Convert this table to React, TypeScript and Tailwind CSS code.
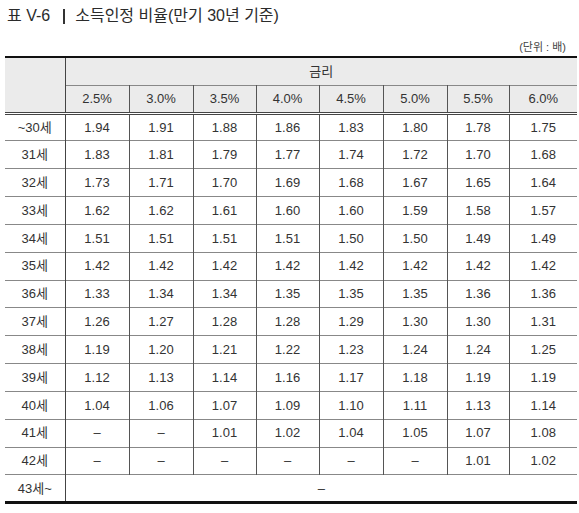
import React from "react";

const rates = ["2.5%", "3.0%", "3.5%", "4.0%", "4.5%", "5.0%", "5.5%", "6.0%"];

const rows: [string, string[]][] = [
  ["~30세", ["1.94", "1.91", "1.88", "1.86", "1.83", "1.80", "1.78", "1.75"]],
  ["31세", ["1.83", "1.81", "1.79", "1.77", "1.74", "1.72", "1.70", "1.68"]],
  ["32세", ["1.73", "1.71", "1.70", "1.69", "1.68", "1.67", "1.65", "1.64"]],
  ["33세", ["1.62", "1.62", "1.61", "1.60", "1.60", "1.59", "1.58", "1.57"]],
  ["34세", ["1.51", "1.51", "1.51", "1.51", "1.50", "1.50", "1.49", "1.49"]],
  ["35세", ["1.42", "1.42", "1.42", "1.42", "1.42", "1.42", "1.42", "1.42"]],
  ["36세", ["1.33", "1.34", "1.34", "1.35", "1.35", "1.35", "1.36", "1.36"]],
  ["37세", ["1.26", "1.27", "1.28", "1.28", "1.29", "1.30", "1.30", "1.31"]],
  ["38세", ["1.19", "1.20", "1.21", "1.22", "1.23", "1.24", "1.24", "1.25"]],
  ["39세", ["1.12", "1.13", "1.14", "1.16", "1.17", "1.18", "1.19", "1.19"]],
  ["40세", ["1.04", "1.06", "1.07", "1.09", "1.10", "1.11", "1.13", "1.14"]],
  ["41세", ["–", "–", "1.01", "1.02", "1.04", "1.05", "1.07", "1.08"]],
  ["42세", ["–", "–", "–", "–", "–", "–", "1.01", "1.02"]],
];

const widths = [60, 64, 64, 63, 63, 64, 64, 62, 68];

const App = () => {
  return (
    <div
      className="w-[579px] h-[513px] bg-white pl-[5px] text-[#2b2b2b]"
      style={{ fontFamily: '"Liberation Sans", "Noto Sans CJK KR", sans-serif' }}
    >
      {/* TITLE */}
      <div className="pt-[6px] pl-[2px] text-[16px] leading-[20px] flex items-center">
        <span>표 V-6</span>
        <span className="inline-block w-[2px] h-[15px] bg-[#333] ml-[13px]" />
        <span className="ml-[10px]">소득인정 비율(만기 30년 기준)</span>
      </div>
      {/* UNIT */}
      <div className="mt-[14px] w-[572px] pr-[11px] text-right text-[11px] leading-[14px] text-[#444]">
        (단위 : 배)
      </div>
      {/* TABLE */}
      <table className="mt-[2px] w-[572px] table-fixed border-collapse text-[13px] text-[#333]">
        <colgroup>
          {widths.map((w, i) => (
            <col key={i} style={{ width: w }} />
          ))}
        </colgroup>
        <thead>
          <tr className="h-[28px] bg-[#ebebeb] border-t-2 border-[#111]">
            <th rowSpan={2} className="border-r border-b-[3px] border-b-[#444] border-double border-r-[#444] font-normal" />
            <th colSpan={8} className="border-b border-[#888] font-normal text-center">
              금리
            </th>
          </tr>
          <tr className="h-[28px] bg-[#ebebeb]">
            {rates.map((r, i) => (
              <th
                key={r}
                className={
                  "font-normal text-center border-b-[3px] border-double border-b-[#444] " +
                  (i < rates.length - 1 ? "border-r border-r-[#555]" : "")
                }
              >
                {r}
              </th>
            ))}
          </tr>
        </thead>
        <tbody>
          {rows.map(([age, vals]) => (
            <tr key={age} className="h-[27.85px] border-b border-[#888]">
              <td className="text-center border-r border-r-[#444]">{age}</td>
              {vals.map((v, i) => (
                <td
                  key={i}
                  className={"text-center " + (i < vals.length - 1 ? "border-r border-r-[#555]" : "")}
                >
                  {v}
                </td>
              ))}
            </tr>
          ))}
          <tr className="h-[28px] border-b-[3px] border-[#111]">
            <td className="text-center border-r border-r-[#444]">43세~</td>
            <td colSpan={8} className="text-center">
              –
            </td>
          </tr>
        </tbody>
      </table>
    </div>
  );
};

export default App;
